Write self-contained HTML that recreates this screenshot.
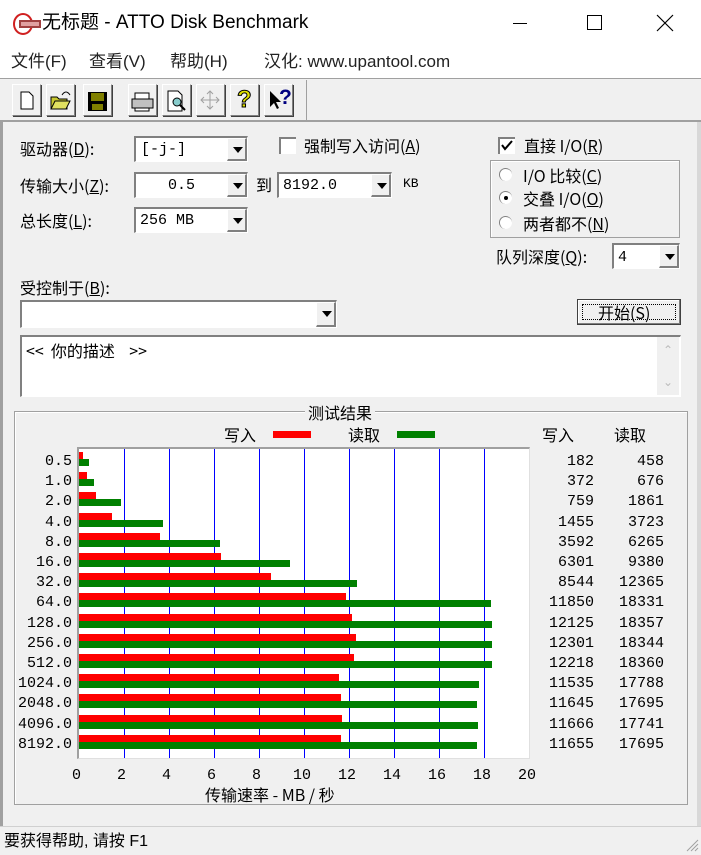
<!DOCTYPE html>
<html><head><meta charset="utf-8"><style>
*{margin:0;padding:0;box-sizing:border-box}
body{width:701px;height:855px;background:#f0f0f0;position:relative;overflow:hidden;font-family:"Liberation Sans","Noto Sans CJK SC",sans-serif;color:#000}
.a{position:absolute}
.t{font-size:16px;line-height:18px;white-space:nowrap;font-family:"Noto Sans CJK SC","WenQuanYi Zen Hei",sans-serif}
.m{font-family:"Liberation Mono","Noto Sans CJK SC",monospace;font-size:15px;line-height:18px;white-space:nowrap}
.sunk{background:#fff;border-top:2px solid #808080;border-left:2px solid #808080;border-right:1px solid #fff;border-bottom:1px solid #fff;box-shadow:1px 1px 0 #f0f0f0}
.dd{position:absolute;right:0;top:0;bottom:0;width:20px;background:#f0f0f0;border-right:2px solid #808080;border-bottom:2px solid #808080;border-top:1px solid #fff;border-left:1px solid #fff}
.dd:after{content:"";position:absolute;left:5px;top:8px;border-left:5px solid transparent;border-right:5px solid transparent;border-top:6px solid #000}
.btn{position:absolute;top:84px;width:29px;height:32px;background:#f0f0f0;border-top:1px solid #fff;border-left:1px solid #fff;border-right:1px solid #808080;border-bottom:1px solid #808080;box-shadow:1px 1px 0 #404040}
.bar{position:absolute;left:0;height:7px}
.r{background:#ff0000}.g{background:#008000}
.grid{position:absolute;top:0;bottom:0;width:1px;background:#0000ff}
.lbl{position:absolute;right:629px;width:70px;text-align:right}
</style></head><body>
<!-- title bar -->
<div class="a" style="left:0;top:0;width:701px;height:45px;background:#fff"></div>
<svg class="a" style="left:12px;top:12px" width="30" height="24"><ellipse cx="11" cy="12" rx="9" ry="10" fill="none" stroke="#d02020" stroke-width="2"/><rect x="7" y="8" width="22" height="8" fill="#a04040"/><rect x="9" y="10" width="18" height="4" fill="#e0a0a0"/></svg>
<div class="a t" style="left:42px;top:12px;font-size:19px;line-height:22px;font-family:'Liberation Sans','Noto Sans CJK SC',sans-serif">无标题 - ATTO Disk Benchmark</div>
<div class="a" style="left:513px;top:23px;width:14px;height:1px;background:#000"></div>
<div class="a" style="left:587px;top:15px;width:15px;height:15px;border:1px solid #000"></div>
<svg class="a" style="left:656px;top:14px" width="18" height="18"><path d="M1 1L17 17M17 1L1 17" stroke="#000" stroke-width="1.2"/></svg>
<!-- menu -->
<div class="a" style="left:0;top:45px;width:701px;height:33px;background:#fff"></div>
<div class="a t" style="left:11px;top:52px;font-size:17px;line-height:20px;font-family:'Liberation Sans','Noto Sans CJK SC',sans-serif;color:#222">文件(F)</div>
<div class="a t" style="left:89px;top:52px;font-size:17px;line-height:20px;font-family:'Liberation Sans','Noto Sans CJK SC',sans-serif;color:#222">查看(V)</div>
<div class="a t" style="left:170px;top:52px;font-size:17px;line-height:20px;font-family:'Liberation Sans','Noto Sans CJK SC',sans-serif;color:#222">帮助(H)</div>
<div class="a t" style="left:264px;top:52px;font-size:17px;line-height:20px;font-family:'Liberation Sans','Noto Sans CJK SC',sans-serif;color:#222">汉化: www.upantool.com</div>
<!-- toolbar -->
<div class="a" style="left:0;top:78px;width:701px;height:1px;background:#a0a0a0"></div>
<div class="a" style="left:7px;top:80px;width:300px;height:40px;border-right:1px solid #a0a0a0"></div>
<div class="btn" style="left:12px"><svg width="27" height="30"><path d="M8 7h8l4 4v13H8z" fill="#fff" stroke="#000"/></svg></div>
<div class="btn" style="left:46px"><svg width="27" height="30"><path d="M4 12h6l2 2h8v10H4z" fill="#c8c830" stroke="#000"/><path d="M4 24l4-8h15l-4 8z" fill="#e0e060" stroke="#000"/><path d="M15 10q4-6 8 0" fill="none" stroke="#000"/></svg></div>
<div class="btn" style="left:83px"><svg width="27" height="30"><rect x="4" y="7" width="19" height="19" fill="#000"/><rect x="7" y="8" width="13" height="8" fill="#808000"/><rect x="8" y="19" width="11" height="6" fill="#808000"/></svg></div>
<div class="btn" style="left:128px"><svg width="27" height="30"><rect x="6" y="8" width="14" height="6" fill="#fff" stroke="#000"/><rect x="3" y="14" width="21" height="9" fill="#c0c0c0" stroke="#000"/><rect x="6" y="23" width="14" height="3" fill="#fff" stroke="#000"/></svg></div>
<div class="btn" style="left:162px"><svg width="27" height="30"><path d="M5 6h10l4 4v16H5z" fill="#fff" stroke="#000"/><circle cx="14" cy="17" r="4" fill="#8cc" stroke="#000"/><path d="M17 20l5 5" stroke="#000" stroke-width="2"/></svg></div>
<div class="btn" style="left:196px"><svg width="27" height="30"><path d="M13 6v18M4 15h18M10 9l3-3 3 3M10 21l3 3 3-3M7 12l-3 3 3 3M19 12l3 3-3 3" fill="none" stroke="#a0a0a0"/></svg></div>
<div class="btn" style="left:230px"><div class="a" style="left:6px;top:1px;font:bold 24px 'Liberation Sans';color:#e0e000;-webkit-text-stroke:1px #000">?</div></div>
<div class="btn" style="left:264px"><svg width="27" height="30"><path d="M5 6v16l4-4 3 6 2-1-3-6h5z" fill="#000"/></svg><div class="a" style="left:14px;top:1px;font:bold 21px 'Liberation Sans';color:#000080">?</div></div>
<div class="a" style="left:0;top:120px;width:701px;height:2px;background:#a0a0a0"></div>
<div class="a" style="left:0;top:122px;width:3px;height:708px;background:#a0a0a0"></div>
<div class="a" style="left:697px;top:122px;width:4px;height:708px;background:#d8d8d8"></div>

<!-- form -->
<div class="a t" style="left:20px;top:139px">驱动器(<u>D</u>):</div>
<div class="a sunk" style="left:134px;top:136px;width:114px;height:26px"><div class="m" style="position:absolute;left:5px;top:3px">[-j-]</div><div class="dd"></div></div>
<div class="a" style="left:279px;top:137px;width:17px;height:17px;background:#fff;border-top:2px solid #808080;border-left:2px solid #808080"></div>
<div class="a t" style="left:304px;top:136px">强制写入访问(<u>A</u>)</div>
<div class="a" style="left:498px;top:137px;width:17px;height:17px;background:#fff;border-top:2px solid #808080;border-left:2px solid #808080"><svg width="15" height="15" style="position:absolute;left:0;top:0"><path d="M2 6l3 4 7-8" stroke="#000" stroke-width="2" fill="none"/></svg></div>
<div class="a t" style="left:524px;top:136px">直接 I/O(<u>R</u>)</div>

<div class="a t" style="left:20px;top:176px">传输大小(<u>Z</u>):</div>
<div class="a sunk" style="left:134px;top:172px;width:114px;height:26px"><div class="m" style="position:absolute;left:32px;top:3px">0.5</div><div class="dd"></div></div>
<div class="a t" style="left:256px;top:175px">到</div>
<div class="a sunk" style="left:277px;top:172px;width:115px;height:26px"><div class="m" style="position:absolute;left:4px;top:3px">8192.0</div><div class="dd"></div></div>
<div class="a m" style="left:403px;top:175px;font-size:13px">KB</div>

<div class="a t" style="left:20px;top:211px">总长度(<u>L</u>):</div>
<div class="a sunk" style="left:134px;top:207px;width:114px;height:26px"><div class="m" style="position:absolute;left:4px;top:3px">256 MB</div><div class="dd"></div></div>

<div class="a" style="left:490px;top:160px;width:190px;height:78px;border:1px solid #a0a0a0;box-shadow:inset 1px 1px 0 #fff"></div>
<div class="a" style="left:499px;top:168px;width:13px;height:13px;border-radius:50%;background:#fff;border-top:1px solid #808080;border-left:1px solid #808080"></div>
<div class="a t" style="left:523px;top:166px">I/O 比较(<u>C</u>)</div>
<div class="a" style="left:499px;top:191px;width:13px;height:13px;border-radius:50%;background:#fff;border-top:1px solid #808080;border-left:1px solid #808080"><div class="a" style="left:4px;top:4px;width:4px;height:4px;background:#000;border-radius:50%"></div></div>
<div class="a t" style="left:523px;top:189px">交叠 I/O(<u>O</u>)</div>
<div class="a" style="left:499px;top:216px;width:13px;height:13px;border-radius:50%;background:#fff;border-top:1px solid #808080;border-left:1px solid #808080"></div>
<div class="a t" style="left:523px;top:214px">两者都不(<u>N</u>)</div>

<div class="a t" style="left:496px;top:247px">队列深度(<u>Q</u>):</div>
<div class="a sunk" style="left:612px;top:243px;width:68px;height:26px"><div class="m" style="position:absolute;left:4px;top:4px">4</div><div class="dd"></div></div>

<div class="a t" style="left:20px;top:278px">受控制于(<u>B</u>):</div>
<div class="a sunk" style="left:20px;top:300px;width:317px;height:28px"><div class="dd"></div></div>
<div class="a" style="left:577px;top:299px;width:104px;height:26px;background:#f0f0f0;border:1px solid #404040;box-shadow:inset -1px -1px 0 #808080,inset 1px 1px 0 #fff"><div class="a" style="left:4px;top:4px;right:4px;bottom:4px;border:1px dotted #000"></div><div class="a t" style="left:20px;top:3px">开始(S)</div></div>

<div class="a sunk" style="left:20px;top:335px;width:661px;height:62px"><div class="a t" style="left:4px;top:4px">&lt;&lt;&nbsp;&nbsp;你的描述&nbsp;&nbsp;&nbsp;&nbsp;&gt;&gt;</div><div class="a" style="right:1px;top:0;width:22px;height:58px;background:#f0f0f0"></div><div class="a" style="right:7px;top:6px;color:#bbb;font:12px 'Liberation Sans'">&#8963;</div><div class="a" style="right:7px;top:38px;color:#bbb;font:12px 'Liberation Sans'">&#8964;</div></div>

<!-- chart frame -->
<div class="a" style="left:14px;top:411px;width:674px;height:394px;border:1px solid #a0a0a0;box-shadow:inset 1px 1px 0 #fff"></div>
<div class="a t" style="left:305px;top:403px;background:#f0f0f0;padding:0 3px">测试结果</div>
<div class="a t" style="left:224px;top:425px">写入</div>
<div class="a" style="left:273px;top:431px;width:38px;height:7px;background:#ff0000"></div>
<div class="a t" style="left:348px;top:425px">读取</div>
<div class="a" style="left:397px;top:431px;width:38px;height:7px;background:#008000"></div>
<div class="a t" style="left:542px;top:425px">写入</div>
<div class="a t" style="left:614px;top:425px">读取</div>

<div class="a" style="left:77px;top:447px;width:453px;height:312px;background:#fff;border-top:2px solid #a0a0a0;border-left:2px solid #a0a0a0;border-right:1px solid #e0e0e0;border-bottom:1px solid #e0e0e0">
<div class="a" style="left:0;top:0;width:450px;height:309px">
<div class="grid" style="left:45px"></div><div class="grid" style="left:90px"></div><div class="grid" style="left:135px"></div><div class="grid" style="left:180px"></div><div class="grid" style="left:225px"></div><div class="grid" style="left:270px"></div><div class="grid" style="left:315px"></div><div class="grid" style="left:360px"></div><div class="grid" style="left:405px"></div>
<div class="bar r" style="top:3px;width:4px"></div><div class="bar g" style="top:10px;width:10px"></div>
<div class="bar r" style="top:23px;width:8px"></div><div class="bar g" style="top:30px;width:15px"></div>
<div class="bar r" style="top:43px;width:17px"></div><div class="bar g" style="top:50px;width:42px"></div>
<div class="bar r" style="top:64px;width:33px"></div><div class="bar g" style="top:71px;width:84px"></div>
<div class="bar r" style="top:84px;width:81px"></div><div class="bar g" style="top:91px;width:141px"></div>
<div class="bar r" style="top:104px;width:142px"></div><div class="bar g" style="top:111px;width:211px"></div>
<div class="bar r" style="top:124px;width:192px"></div><div class="bar g" style="top:131px;width:278px"></div>
<div class="bar r" style="top:144px;width:267px"></div><div class="bar g" style="top:151px;width:412px"></div>
<div class="bar r" style="top:165px;width:273px"></div><div class="bar g" style="top:172px;width:413px"></div>
<div class="bar r" style="top:185px;width:277px"></div><div class="bar g" style="top:192px;width:413px"></div>
<div class="bar r" style="top:205px;width:275px"></div><div class="bar g" style="top:212px;width:413px"></div>
<div class="bar r" style="top:225px;width:260px"></div><div class="bar g" style="top:232px;width:400px"></div>
<div class="bar r" style="top:245px;width:262px"></div><div class="bar g" style="top:252px;width:398px"></div>
<div class="bar r" style="top:266px;width:263px"></div><div class="bar g" style="top:273px;width:399px"></div>
<div class="bar r" style="top:286px;width:262px"></div><div class="bar g" style="top:293px;width:398px"></div>
</div></div>

<div class="a m" style="left:0;top:452px;width:72px;text-align:right;line-height:20.2px;font-size:15px">0.5<br>1.0<br>2.0<br>4.0<br>8.0<br>16.0<br>32.0<br>64.0<br>128.0<br>256.0<br>512.0<br>1024.0<br>2048.0<br>4096.0<br>8192.0</div>
<div class="a m" style="left:530px;top:452px;width:64px;text-align:right;line-height:20.2px;font-size:15px">182<br>372<br>759<br>1455<br>3592<br>6301<br>8544<br>11850<br>12125<br>12301<br>12218<br>11535<br>11645<br>11666<br>11655</div>
<div class="a m" style="left:600px;top:452px;width:64px;text-align:right;line-height:20.2px;font-size:15px">458<br>676<br>1861<br>3723<br>6265<br>9380<br>12365<br>18331<br>18357<br>18344<br>18360<br>17788<br>17695<br>17741<br>17695</div>

<div class="a m" style="left:72px;top:767px">0</div>
<div class="a m" style="left:117px;top:767px">2</div>
<div class="a m" style="left:162px;top:767px">4</div>
<div class="a m" style="left:207px;top:767px">6</div>
<div class="a m" style="left:252px;top:767px">8</div>
<div class="a m" style="left:293px;top:767px">10</div>
<div class="a m" style="left:338px;top:767px">12</div>
<div class="a m" style="left:383px;top:767px">14</div>
<div class="a m" style="left:428px;top:767px">16</div>
<div class="a m" style="left:473px;top:767px">18</div>
<div class="a m" style="left:518px;top:767px">20</div>
<div class="a t" style="left:205px;top:785px">传输速率 - MB / 秒</div>

<!-- status bar -->
<div class="a" style="left:0;top:826px;width:701px;height:29px;background:#f0f0f0;border-top:1px solid #d0d0d0"></div>
<div class="a t" style="left:4px;top:833px;font-family:'Liberation Sans','Noto Sans CJK SC',sans-serif">要获得帮助, 请按 F1</div>
<svg class="a" style="left:685px;top:838px" width="14" height="14"><path d="M13 2L2 13M13 6L6 13M13 10L10 13" stroke="#a0a0a0"/></svg>
</body></html>
